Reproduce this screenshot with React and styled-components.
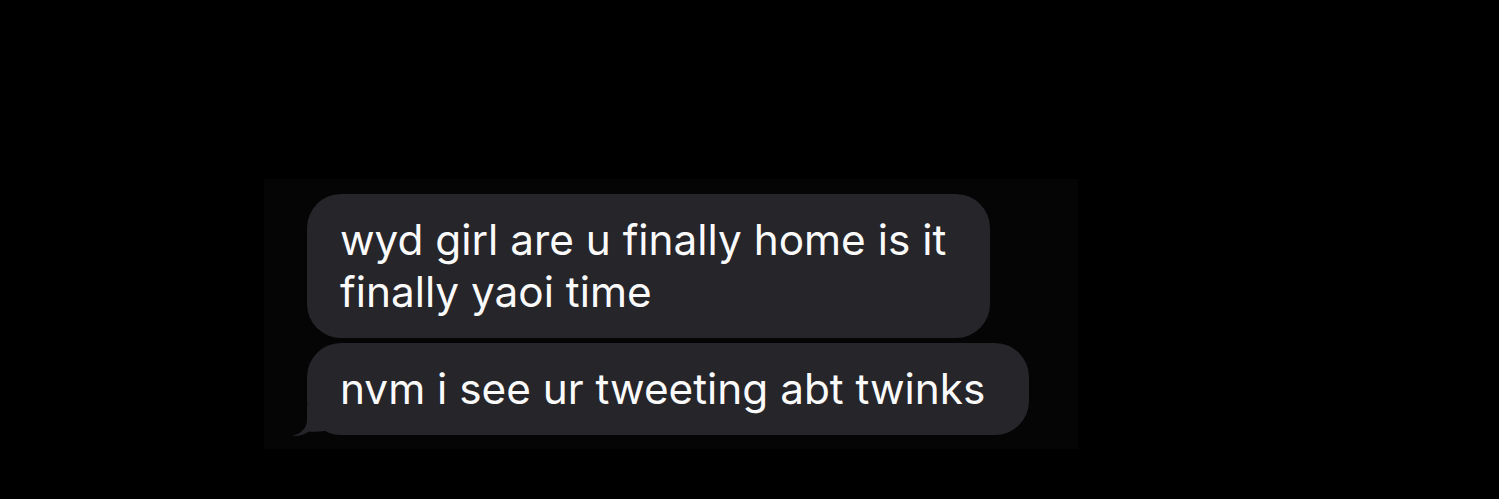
import React from "react";
import styled, { createGlobalStyle } from "styled-components";

const Global = createGlobalStyle`
  html, body { margin: 0; padding: 0; background: #000; }
  body { font-family: Inter, "Liberation Sans", sans-serif; }
`;

const Page = styled.div`
  min-height: 499px;
  padding: 179px 0 0 264px;
  box-sizing: border-box;
  background: #000;
`;

const Panel = styled.div`
  width: 814px;
  height: 270px;
  box-sizing: border-box;
  padding: 15px 0 13px 43px;
  background: #050505;
  display: flex;
  flex-direction: column;
  align-items: flex-start;
  gap: 5px;
`;

const Bubble = styled.div`
  position: relative;
  background: #26252a;
  color: #fafafa;
  border-radius: 34px;
  padding: 20px 44px 20px 33px;
  font-family: Inter, "Liberation Sans", sans-serif;
  font-size: 42.3px;
  line-height: 52px;
  letter-spacing: 0;
`;

const Line = styled.div`
  white-space: nowrap;
`;

const Tail = styled.svg`
  position: absolute;
  left: -16px;
  bottom: -1px;
  width: 40px;
  height: 30px;
  display: ${(p) => (p.$show ? "block" : "none")};
`;

const messages = [
  { lines: ["wyd girl are u finally home is it", "finally yaoi time"], tail: false },
  { lines: ["nvm i see ur tweeting abt twinks"], tail: true },
];

export default function App() {
  return (
    <>
      <Global />
      <Page>
        <Panel>
          {messages.map((m, i) => (
            <Bubble key={i}>
              {m.lines.map((l, j) => (
                <Line key={j}>{l}</Line>
              ))}
              <Tail $show={m.tail} viewBox="0 0 40 30">
                <path
                  d="M16 0 L16 14 C16 22 10 28 1 30 C8 30.5 14 28 18 25.5 C22 26 28 25.5 34 25 L34 0 Z"
                  fill="#26252a"
                />
              </Tail>
            </Bubble>
          ))}
        </Panel>
      </Page>
    </>
  );
}
